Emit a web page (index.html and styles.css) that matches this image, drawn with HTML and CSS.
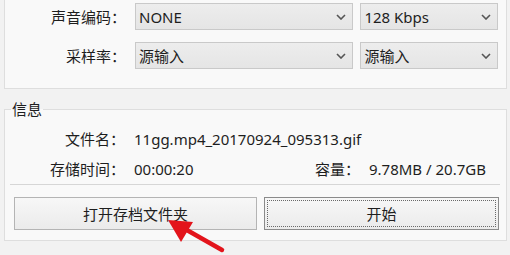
FILE: index.html
```html
<!DOCTYPE html>
<html lang="zh">
<head>
    <meta charset="UTF-8">
    <title>录制设置</title>
    <link rel="stylesheet" href="styles.css">
</head>
<body>
    <div class="group group-top">
        <div class="row">
            <div class="label">声音编码：</div>
            <div class="combo combo-wide">
                <span>NONE</span>
                <svg class="chevron" width="10" height="6" viewBox="0 0 10 6"><path d="M1 1 L5 5 L9 1" fill="none" stroke="#555" stroke-width="1.6"/></svg>
            </div>
            <div class="combo combo-narrow">
                <span>128 Kbps</span>
                <svg class="chevron" width="10" height="6" viewBox="0 0 10 6"><path d="M1 1 L5 5 L9 1" fill="none" stroke="#555" stroke-width="1.6"/></svg>
            </div>
        </div>
        <div class="row">
            <div class="label">采样率：</div>
            <div class="combo combo-wide">
                <span>源输入</span>
                <svg class="chevron" width="10" height="6" viewBox="0 0 10 6"><path d="M1 1 L5 5 L9 1" fill="none" stroke="#555" stroke-width="1.6"/></svg>
            </div>
            <div class="combo combo-narrow">
                <span>源输入</span>
                <svg class="chevron" width="10" height="6" viewBox="0 0 10 6"><path d="M1 1 L5 5 L9 1" fill="none" stroke="#555" stroke-width="1.6"/></svg>
            </div>
        </div>
    </div>

    <fieldset class="group group-info">
        <legend>信息</legend>
        <div class="info-row">
            <div class="label">文件名：</div>
            <div class="value">11gg.mp4_20170924_095313.gif</div>
        </div>
        <div class="info-row">
            <div class="label">存储时间：</div>
            <div class="value value-short">00:00:20</div>
            <div class="label label-small">容量：</div>
            <div class="value">9.78MB / 20.7GB</div>
        </div>
        <div class="separator"></div>
        <div class="buttons">
            <button class="btn btn-open">打开存档文件夹</button>
            <button class="btn btn-start"><span class="focus">开始</span></button>
        </div>
    </fieldset>

    <svg class="pointer" width="70" height="45" viewBox="0 0 70 45">
        <line x1="62" y1="40" x2="18" y2="15" stroke="#e3141b" stroke-width="4.5" stroke-linecap="round"/>
        <polygon points="8,10 33,12 21,32" fill="#e3141b"/>
    </svg>
</body>
</html>
```

FILE: styles.css
```css
body {
    margin: 0;
    background: #f2f2f2;
    font-family: "Noto Sans", "Noto Sans CJK SC", sans-serif;
    font-size: 15px;
    color: #1e1e1e;
    position: relative;
    height: 255px;
    overflow: hidden;
}

.group {
    background: #f9f9f9;
    border: 1px solid #dedede;
    margin: 0 3px 0 4px;
}

.group-top {
    border-top: none;
    height: 89px;
    box-sizing: border-box;
    padding: 3px 8px 0 1px;
}

.row {
    display: flex;
    align-items: center;
    height: 27px;
    margin-bottom: 12px;
}

.label {
    width: 120px;
    flex-shrink: 0;
    text-align: right;
    line-height: 24px;
}

.combo {
    box-sizing: border-box;
    height: 27px;
    background: linear-gradient(#ededed, #e5e5e5);
    border: 1px solid #c9c9c9;
    display: flex;
    align-items: center;
    justify-content: space-between;
    padding: 0 6px 0 3px;
    line-height: 24px;
}

.combo-wide {
    width: 219px;
    margin-left: 9px;
}

.combo-narrow {
    width: 138px;
    margin-left: 7px;
}

.chevron {
    display: block;
}

.group-info {
    margin-top: 11px;
    padding: 6px 0 10px 0;
    min-width: 0;
}

.group-info legend {
    margin-left: 6px;
    padding: 0 1px;
    line-height: 18px;
    font-size: 15px;
}

.info-row {
    display: flex;
    align-items: center;
    height: 30px;
}

.value {
    margin-left: 9px;
}

.value-short {
    width: 166px;
}

.label-small {
    width: 60px;
}

.separator {
    height: 1px;
    background: #d6d6d6;
    margin: 0 6px 0 5px;
}

.buttons {
    display: flex;
    margin: 12px 0 0 9px;
}

.btn {
    box-sizing: border-box;
    height: 33px;
    font-family: inherit;
    font-size: 15px;
    color: #1e1e1e;
    background: linear-gradient(#f7f7f7, #ebebeb);
    border: 1px solid #b4b4b4;
    padding: 0;
}

.btn-open {
    width: 243px;
}

.btn-start {
    width: 235px;
    margin-left: 7px;
    border-color: #8a8a8a;
    padding: 2px;
}

.focus {
    display: flex;
    align-items: center;
    justify-content: center;
    height: 100%;
    border: 1px dotted #6a6a6a;
    box-sizing: border-box;
}

.pointer {
    position: absolute;
    left: 160px;
    top: 210px;
}
```
